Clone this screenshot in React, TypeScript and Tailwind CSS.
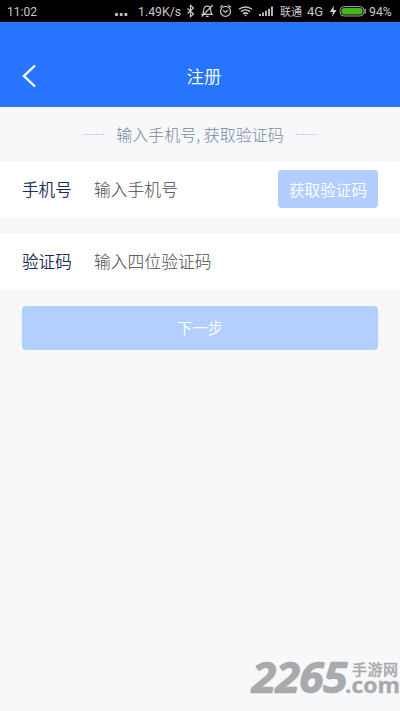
import { useState } from "react";
import type { ReactNode } from "react";

function StatusBar() {
  return (
    <div className="flex h-[22px] items-center bg-black pl-[7px] font-['Roboto','Noto_Sans_CJK_SC',sans-serif] text-[12.5px] leading-[22px] whitespace-nowrap text-[#c8c8c8]">
      <span className="w-[108px] pt-px text-[12px]">11:02</span>
      <svg className="mr-[10px] shrink-0" width="13" height="22" fill="currentColor">
        <rect x="0" y="13" width="3" height="3" rx="1" />
        <rect x="4.7" y="13" width="3" height="3" rx="1" />
        <rect x="9.4" y="13" width="3" height="3" rx="1" />
      </svg>
      <span className="w-[48px] shrink-0 pt-px text-[12.3px]">1.49K/s</span>
      {/* bluetooth, muted bell, alarm, wifi, signal */}
      <svg className="shrink-0" width="94" height="22" fill="none" stroke="currentColor" strokeWidth="1.2">
        <path d="M1.5 8.5l6 5.5-3 2.7V5.3l3 2.7-6 5.5" />
        <path d="M16.5 14.3c1.2-1 1.2-2.2 1.2-4.2 0-2.2 1.3-3.9 3.5-3.9s3.5 1.7 3.5 3.9c0 2 0 3.2 1.2 4.2zM19.8 16.3h2.8M26.8 5l-11 11.5" />
        <circle cx="39.5" cy="11.4" r="5" />
        <path d="M37 10.3l2.4 2 2.6-2M34 7.4l2.6-2.2M45 7.4l-2.6-2.2" />
        <path d="M53 9.3c3.6-3.2 9.4-3.2 13 0M55 11.6c2.6-2.2 6.4-2.2 9 0M57 13.8c1.6-1.2 3.4-1.2 5 0" strokeWidth="1.5" />
        <path d="M58 14.8h3l-1.5 1.7z" fill="currentColor" stroke="none" />
        <path d="M74 14v2M77 12.5V16M80 10.7V16M83 8.7V16M86 6.5V16" strokeWidth="1.8" />
      </svg>
      <span className="w-[27px] shrink-0 pt-[3px] text-[11px]">联通</span>
      <span className="w-[22px] shrink-0 pt-px text-[13px]">4G</span>
      <svg className="mr-[1px] shrink-0" width="39" height="22">
        <path d="M5 5.5L.8 12H4l-1.2 5L7.6 10H4.5z" fill="#d0d0d0" />
        <rect x="11" y="6.5" width="24" height="9.5" rx="4" fill="#111" stroke="#999" />
        <rect x="12.5" y="8" width="21" height="6.5" rx="2.5" fill="#45b414" />
        <path d="M36.3 9v4.5" stroke="#999" strokeWidth="1.5" />
      </svg>
      <span className="pt-px text-[12.3px]">94%</span>
    </div>
  );
}

function Dash() {
  return (
    <svg width="22" height="2" className="shrink-0">
      <path d="M0 1.5h22" stroke="#cdd5de" strokeDasharray="5 .7" />
    </svg>
  );
}

type FieldProps = {
  label: string;
  placeholder: string;
  children?: ReactNode;
};

function Field({ label, placeholder, children }: FieldProps) {
  const [value, setValue] = useState("");

  return (
    <div className="flex h-14 items-center bg-white px-[22px]">
      <label className="w-[72px] shrink-0 text-[16.6px] font-[350] text-[#182c56]">{label}</label>
      <input
        aria-label={label}
        value={value}
        onChange={(e) => setValue(e.target.value)}
        placeholder={placeholder}
        className="min-w-0 flex-1 bg-transparent pt-[2px] text-[16.8px] font-light outline-none placeholder:text-[#484848] placeholder:opacity-100"
      />
      {children}
    </div>
  );
}

function Watermark() {
  return (
    <svg
      className="pointer-events-none absolute right-0 bottom-0"
      width="152"
      height="56"
      fill="#a9aaab"
      stroke="#a9aaab"
      strokeLinejoin="round"
      strokeLinecap="round"
    >
      <text x="4" y="37" fontFamily="'Open Sans', sans-serif" fontWeight="600" fontStyle="italic" fontSize="40" strokeWidth="2.4" textLength="95" lengthAdjust="spacingAndGlyphs">
        2265
      </text>
      <text x="104" y="20" fontFamily="'Noto Sans CJK SC', sans-serif" fontWeight="500" fontSize="15" strokeWidth="0.3" textLength="46">
        手游网
      </text>
      <text x="97" y="38" fontFamily="'Open Sans', sans-serif" fontWeight="700" fontSize="22" strokeWidth="0.3" textLength="55" lengthAdjust="spacingAndGlyphs">
        .com
      </text>
    </svg>
  );
}

export default function App() {
  return (
    <div className="relative flex h-[711px] w-[400px] flex-col overflow-hidden bg-[#f6f8fa] font-['Noto_Sans_CJK_SC',sans-serif]">
      <StatusBar />
      <header className="flex h-[85px] items-center bg-[#2775ff] px-[22px] pt-[23px] text-white">
        <button aria-label="返回" className="w-[22px]">
          <svg width="16" height="24" fill="none" stroke="currentColor" strokeWidth="2.4">
            <path d="M13 1.5L2 12l11 10.5" />
          </svg>
        </button>
        <h1 className="flex-1 pr-[14px] text-center text-[17.4px] font-[350]">注册</h1>
      </header>

      <div className="flex h-[54px] items-center justify-center gap-[11px] text-[16px] font-light text-[#75899f]">
        <Dash />
        <span className="whitespace-nowrap">输入手机号, 获取验证码</span>
        <Dash />
      </div>

      <form className="flex flex-col gap-4" onSubmit={(e) => e.preventDefault()}>
        <Field label="手机号" placeholder="输入手机号">
          <button type="button" className="h-[38px] w-[100px] shrink-0 rounded-[4px] bg-[#b2cdff] pt-px text-[15.6px] font-[350] text-white">
            获取验证码
          </button>
        </Field>
        <Field label="验证码" placeholder="输入四位验证码" />
        <button className="mx-[22px] mt-px h-[44px] rounded-[4px] bg-[#b2cfff] text-[15.4px] font-[350] text-white">
          下一步
        </button>
      </form>
      <Watermark />
    </div>
  );
}
